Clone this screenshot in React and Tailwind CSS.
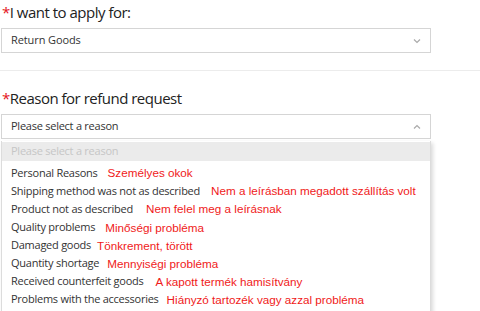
import React from "react";

const items = [
  ["Personal Reasons", "Személyes okok", "ml-[10px]"],
  ["Shipping method was not as described", "Nem a leírásban megadott szállítás volt", "ml-[11px]"],
  ["Product not as described", "Nem felel meg a leírásnak", "ml-[13px]"],
  ["Quality problems", "Minőségi probléma", "ml-[10px]"],
  ["Damaged goods", "Tönkrement, törött", "ml-[6px]"],
  ["Quantity shortage", "Mennyiségi probléma", "ml-[8px]"],
  ["Received counterfeit goods", "A kapott termék hamisítvány", "ml-[12px]"],
  ["Problems with the accessories", "Hiányzó tartozék vagy azzal probléma", "ml-[8px]"],
];

function Chevron({ up }) {
  return (
    <svg width="8" height="6" viewBox="0 0 8 6" className="text-[#aaa]">
      <path d={up ? "M1 4.5 L4 1.5 L7 4.5" : "M1 1.5 L4 4.5 L7 1.5"} fill="none" stroke="currentColor" strokeWidth="1.2" />
    </svg>
  );
}

export default function App() {
  return (
    <div className="w-[480px] h-[311px] overflow-hidden bg-white font-['Open_Sans',sans-serif] text-[#333]">
      <div className="pt-[1px] pl-[2px] text-[15px] tracking-[-0.5px] leading-[22px] text-[#222]">
        <span className="text-[#e4141b]">*</span>I want to apply for:
      </div>
      <div className="mt-[5px] ml-[1px] w-[430px] h-[25px] border border-[#d5d5d5] flex items-center justify-between pl-[9px] pr-[9px] text-[11px] tracking-[-0.1px] text-[#333]">
        <span>Return Goods</span>
        <Chevron />
      </div>
      <div className="mt-[17px] h-px bg-[#ececec]" />
      <div className="mt-[16px] pl-[2px] text-[15px] tracking-[-0.5px] leading-[22px] text-[#222]">
        <span className="text-[#e4141b]">*</span>Reason for refund request
      </div>
      <div className="mt-[5px] ml-[1px] w-[430px] h-[25px] border border-[#d5d5d5] flex items-center justify-between pl-[9px] pr-[9px] text-[11px] tracking-[-0.25px] text-[#333]">
        <span>Please select a reason</span>
        <Chevron up />
      </div>
      <div className="mt-[2px] ml-[1px] w-[430px] border-l border-r border-[#dcdcdc] shadow-[2px_2px_4px_rgba(0,0,0,0.15)] pt-[1px] pb-[4px]">
        <div className="h-[19px] bg-[#ebebeb] flex items-center pl-[9px] text-[11px] tracking-[-0.25px] text-[#c6c6c6]">
          Please select a reason
        </div>
        {items.map(([en, hu, ml]) => (
          <div key={en} className="h-[18.1px] flex items-center pl-[9px] text-[11px] whitespace-nowrap [&:nth-child(2)]:mt-[3px]">
            <span className="text-[#333] tracking-[-0.25px]">{en}</span>
            <span className={`${ml} font-['Liberation_Sans',Arial,sans-serif] text-[11.7px] text-[#f01a1a]`}>{hu}</span>
          </div>
        ))}
      </div>
    </div>
  );
}
